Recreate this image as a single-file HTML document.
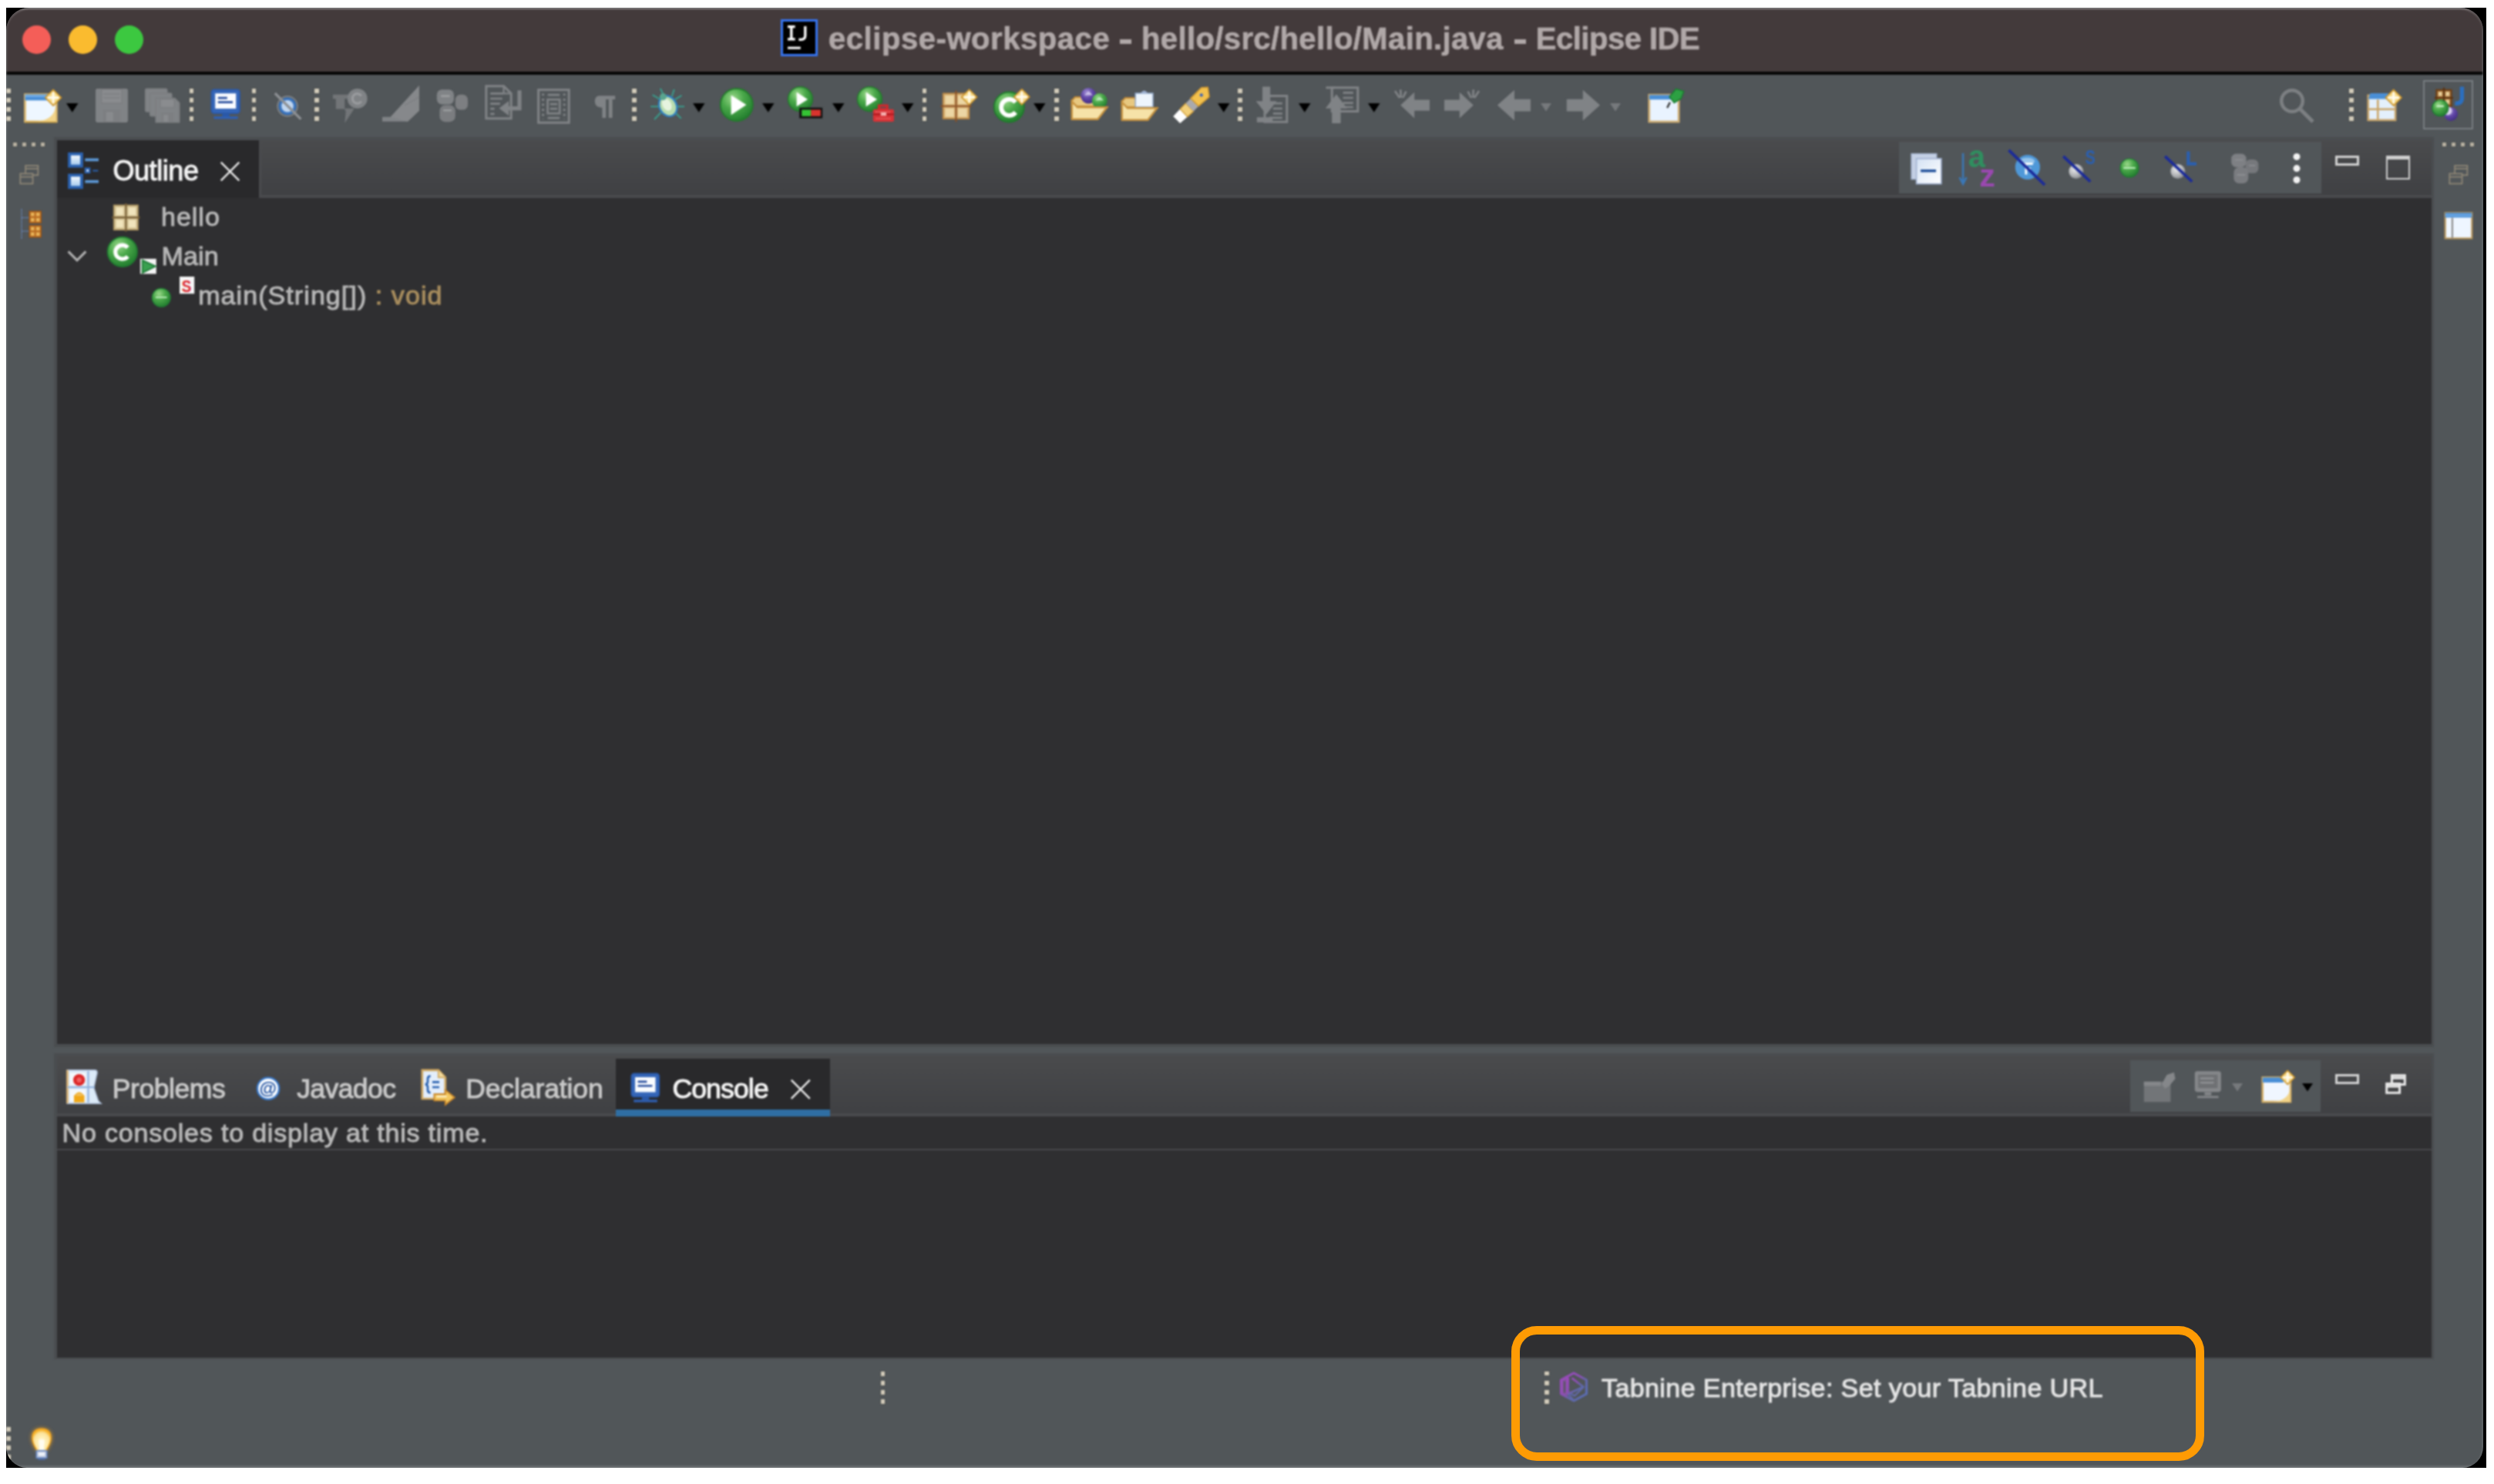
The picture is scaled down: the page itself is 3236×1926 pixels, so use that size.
<!DOCTYPE html>
<html><head><meta charset="utf-8"><title>Eclipse IDE</title>
<style>
html,body{margin:0;padding:0;}
body{width:3236px;height:1926px;background:#fff;overflow:hidden;position:relative;font-family:"Liberation Sans",sans-serif;}
.abs{position:absolute;}
#back{position:absolute;left:8px;top:10px;width:3218px;height:1895px;background:#000;}
#win{position:absolute;left:8px;top:10px;width:3214px;height:1895px;background:#515659;border-radius:30px 30px 27px 27px;overflow:hidden;}
#title{position:absolute;left:0;top:0;width:100%;height:84px;background:#433a3b;border-top:2px solid #6d6566;box-sizing:border-box;}
#tline{position:absolute;height:3.6px;background:#050505;}
.tl{position:absolute;width:37px;height:37px;border-radius:50%;top:33px;}
.t{position:absolute;white-space:nowrap;line-height:1;opacity:.999;-webkit-text-stroke:1px currentColor;}
.tt{-webkit-text-stroke:.6px currentColor;}
.tt{color:#b0a8a8;font-weight:bold;}
.pane{position:absolute;background:#2f2f31;}
.tabbar{position:absolute;background:linear-gradient(#4a4b4d,#3f4043);}
.atab{position:absolute;background:#29292b;}
.tbg{position:absolute;background:#515659;}
svg{position:absolute;overflow:visible;}
.dot{position:absolute;width:5.8px;height:5.8px;margin:.1px;background:#d2cbba;box-shadow:0 0 0 .6px rgba(70,66,58,.35);}
#c{position:absolute;left:-8px;top:-10px;width:3236px;height:1926px;}
#title{left:8px;top:10px;width:3214px;}
#tline{left:8px;top:93.3px;width:3214px;}
.tl{top:33px;}
.tree{color:#b6b6b6;}
.btab{color:#c8c8c8;}
.dot.s{width:4.6px;height:4.6px;background:#b9b2a2;}
#edge{position:absolute;left:8px;top:10px;width:3214px;height:1895px;border-radius:30px 30px 27px 27px;box-sizing:border-box;border:1.5px solid rgba(255,255,255,.22);border-top:2px solid rgba(255,255,255,.25);border-bottom:0;pointer-events:none;}
#bot{position:absolute;left:8px;top:1900.5px;width:3214px;height:5px;background:linear-gradient(rgba(255,255,255,0),rgba(255,255,255,.28));}
#c{filter:blur(1.2px);}
#t_outline{left:146.40px;top:204.03px;font-size:36px;letter-spacing:-0.417px}
#t_hello{left:209.00px;top:263.92px;font-size:34px;letter-spacing:1.000px}
#t_main{left:209.40px;top:314.62px;font-size:34px;letter-spacing:0.167px}
#t_meth{left:257.20px;top:366.22px;font-size:34px;letter-spacing:1.075px}
#t_prob{left:145.80px;top:1395.75px;font-size:35.5px;letter-spacing:-0.429px}
#t_jdoc{left:385.20px;top:1395.75px;font-size:35.5px;letter-spacing:-0.583px}
#t_decl{left:604.20px;top:1395.75px;font-size:35.5px;letter-spacing:-0.100px}
#t_cons{left:872.40px;top:1395.75px;font-size:35.5px;letter-spacing:-0.833px}
#t_nocon{left:80.60px;top:1452.92px;font-size:34px;letter-spacing:0.814px}
#t_tab{left:2078.00px;top:1783.82px;font-size:34px;letter-spacing:0.410px}
#tt_a{left:1075.00px;top:30.34px;font-size:40px;letter-spacing:0.555px}
#tt_b{left:1481.00px;top:30.34px;font-size:40px;letter-spacing:0.388px}
#tt_c{left:1992.80px;top:30.34px;font-size:40px;letter-spacing:-0.500px}

</style></head>
<body>
<svg style="position:absolute;width:0;height:0" aria-hidden="true"><defs>
<radialGradient id="gSp" cx=".5" cy=".5" r=".6"><stop offset="0" stop-color="#fff3c4"/><stop offset=".55" stop-color="#f2cf72"/><stop offset="1" stop-color="#d9982c"/></radialGradient>
<radialGradient id="gG" cx=".38" cy=".3" r=".75"><stop offset="0" stop-color="#9ad88a"/><stop offset=".45" stop-color="#4aa84a"/><stop offset="1" stop-color="#1f7a2c"/></radialGradient>
<radialGradient id="gGr" cx=".4" cy=".35" r=".7"><stop offset="0" stop-color="#ececec"/><stop offset=".6" stop-color="#b4b6b9"/><stop offset="1" stop-color="#84878b"/></radialGradient>
<radialGradient id="gP" cx=".4" cy=".3" r=".75"><stop offset="0" stop-color="#a694d8"/><stop offset=".5" stop-color="#6046a6"/><stop offset="1" stop-color="#3f2a80"/></radialGradient>
<linearGradient id="gBx2" x1="0" y1="0" x2="1" y2="1"><stop offset="0" stop-color="#d4e2f4"/><stop offset="1" stop-color="#ffffff"/></linearGradient>
<linearGradient id="gBx" x1="0" y1="0" x2="0" y2="1"><stop offset="0" stop-color="#ffffff"/><stop offset="1" stop-color="#9cc4ec"/></linearGradient>
</defs></svg>
<div id="back"></div>
<div id="win"><div id="c">
<div id="title"></div>
<div id="tline"></div>
<i class="tl" style="left:28.5px;background:#f45e58"></i>
<i class="tl" style="left:88.5px;background:#fabb2f"></i>
<i class="tl" style="left:148.5px;background:#3cc840"></i>
<svg style="left:1013px;top:25px;width:48px;height:48px" viewBox="0 0 16 16" >
<rect x="0.5" y="0.5" width="15" height="15" fill="#000" stroke="#3574f0" stroke-width="1"/>
<path d="M3 3.2 H6.2 M4.6 3.2 V8.6 M3 8.6 H6.2" stroke="#fff" stroke-width="1.1" fill="none"/>
<path d="M10.6 3 V7 Q10.6 8.8 8.8 8.8 H7.8" stroke="#fff" stroke-width="1.1" fill="none"/>
<path d="M3 12.4 H8.6" stroke="#fff" stroke-width="1"/>
</svg>
<div class="t tt" id="tt_a">eclipse-workspace</div><div class="abs" style="left:1453.3px;top:51.4px;width:14.5px;height:5.2px;background:#b0a8a8"></div><div class="t tt" id="tt_b">hello/src/hello/Main.java</div><div class="abs" style="left:1965.4px;top:51.4px;width:14.5px;height:5.2px;background:#b0a8a8"></div><div class="t tt" id="tt_c">Eclipse IDE</div>

<!-- main toolbar -->
<i class="dot" style="left:8px;top:115px"></i><i class="dot" style="left:8px;top:127.1px"></i><i class="dot" style="left:8px;top:139.2px"></i><i class="dot" style="left:8px;top:151.3px"></i>
<svg style="left:31px;top:114.5px;width:48px;height:48px" viewBox="0 0 16 16" >
<rect x="0.5" y="2.5" width="13.6" height="11.8" fill="#eef7ff" stroke="#dcb96e" stroke-width=".9"/>
<rect x="0.5" y="2.5" width="10" height="2.6" fill="#4a8fd6"/>
<path d="M0.5 3.2 H10.4" stroke="#8cc0f0" stroke-width=".5"/>
<path d="M13.8 6.5 C13.8 11.4 10.4 14.1 4.6 14.3 L13.8 14.3Z" fill="#f1d48a"/>
<path d="M0.6 14.5 H14" stroke="#c99b3a" stroke-width=".5"/>
<path d="M12.7 0.3999999999999999 L16.2 3.9 L12.7 7.4 L9.2 3.9Z" fill="url(#gSp)" stroke="#c8902a" stroke-width=".45"/><path d="M12.7 1.38 V6.42 M10.18 3.9 H15.219999999999999" stroke="#fffdf2" stroke-width=".85"/></svg>
<svg style="left:86px;top:133.5px;width:15.5px;height:15.5px" viewBox="0 0 16 16" ><path d="M0 0H16L8 12Z" fill="#000"/></svg>
<svg style="left:121px;top:113px;width:48px;height:48px" viewBox="0 0 16 16" >
<path d="M1 1.5 Q1 .7 1.8 .7 H14.2 Q15 .7 15 1.5 V14.5 Q15 15.3 14.2 15.3 H1.8 Q1 15.3 1 14.5Z" fill="#808386"/>
<rect x="3.6" y="1" width="8.8" height="6" fill="#8a8c8f" stroke="#7c7e81" stroke-width=".5"/>
<path d="M4.5 3 H11.5 M4.5 4.6 H11.5" stroke="#7c7e81" stroke-width=".5"/>
<rect x="4.2" y="9.8" width="7.6" height="5.5" fill="#7d7f82"/>
<rect x="5.6" y="10.8" width="3" height="4" fill="#888a8d"/>
</svg>
<svg style="left:187px;top:113px;width:48px;height:48px" viewBox="0 0 16 16" >
<rect x="0.5" y="0.7" width="9.5" height="10" rx=".6" fill="#808386" stroke="#7a7c7f" stroke-width=".4"/>
<rect x="2.5" y="2.6" width="9.5" height="10" rx=".6" fill="#808386" stroke="#7a7c7f" stroke-width=".4"/>
<path d="M5 4.8 H13.3 L15.3 6.8 V15.3 H5Z" fill="#808386" stroke="#7a7c7f" stroke-width=".4"/>
<rect x="7" y="5.2" width="6" height="3.6" fill="#8a8c8f" stroke="#7c7e81" stroke-width=".4"/>
<rect x="7.4" y="11" width="5.4" height="4.3" fill="#7d7f82"/>
<rect x="8.4" y="12" width="2" height="3" fill="#888a8d"/>
</svg>
<i class="dot" style="left:245.5px;top:115px"></i><i class="dot" style="left:245.5px;top:127.1px"></i><i class="dot" style="left:245.5px;top:139.2px"></i><i class="dot" style="left:245.5px;top:151.3px"></i>
<svg style="left:272px;top:113.5px;width:48px;height:48px" viewBox="0 0 16 16" >
<rect x="0.8" y="0.8" width="12.2" height="10.2" rx="1.2" fill="#3566b8" stroke="#2a58a8" stroke-width=".6"/>
<rect x="2.4" y="2.4" width="9" height="6.6" fill="#fafcff"/>
<path d="M3.6 4.4 H7.6 M3.6 6.2 H10" stroke="#2a4f9e" stroke-width=".9"/>
<path d="M5.4 11.2 H8.6 V12.4 H5.4Z" fill="#2a58a8"/>
<path d="M1.8 12.9 H12.2" stroke="#2f60b4" stroke-width="1.1"/>
</svg>
<i class="dot" style="left:326.6px;top:115px"></i><i class="dot" style="left:326.6px;top:127.1px"></i><i class="dot" style="left:326.6px;top:139.2px"></i><i class="dot" style="left:326.6px;top:151.3px"></i>
<svg style="left:352px;top:112px;width:48px;height:48px" viewBox="0 0 16 16" >
<circle cx="7" cy="8.6" r="4.3" fill="none" stroke="#8d9094" stroke-width=".5" opacity=".9"/>
<circle cx="7" cy="8.6" r="3.2" fill="#c0d6f0" stroke="#3a74be" stroke-width="1.2"/>
<path d="M1.6 3 L12.8 14.2" stroke="#8d9094" stroke-width="1.1"/>
</svg>
<i class="dot" style="left:408px;top:115px"></i><i class="dot" style="left:408px;top:127.1px"></i><i class="dot" style="left:408px;top:139.2px"></i><i class="dot" style="left:408px;top:151.3px"></i>
<svg style="left:431px;top:112px;width:48px;height:48px" viewBox="0 0 16 16" >
<path d="M0.3 3.6 H7 V5.4 H5.4 V9.8 H1.6 V5.4 H0.3Z" fill="#727578"/>
<circle cx="10.9" cy="5.3" r="4.3" fill="#808386"/>
<path d="M12.6 4.1 A2.1 2.1 0 1 0 12.6 6.5" fill="none" stroke="#9a9c9f" stroke-width="1"/>
<path d="M5.2 9.6 H9.6 L5.4 16 L5.9 10.8Z" fill="#727578"/>
</svg>
<svg style="left:496px;top:111px;width:48px;height:48px" viewBox="0 0 16 16" >
<path d="M0 15.6 H11 L16 10.8 V0 L3.6 13.6 H0Z" fill="#808386"/>
<path d="M3.6 13.6 L16 0 V10.8 L11 15.6 Z" fill="#86888b"/>
<path d="M9.6 8.6 L16 5" stroke="#7c7e81" stroke-width=".4"/>
</svg>
<svg style="left:565px;top:112px;width:48px;height:48px" viewBox="0 0 16 16" >
<rect x="0.6" y="1.4" width="7.4" height="6.4" rx="2.2" fill="#808386"/>
<rect x="8.6" y="3.6" width="5.4" height="6.6" rx="2.2" fill="#7d7f82"/>
<rect x="1.8" y="8.2" width="6.8" height="7.2" rx="2.4" fill="#7b7d80"/>
<path d="M2.4 4.2 H6.2 M3.4 10.4 H7" stroke="#a0a2a4" stroke-width=".7"/>
</svg>
<svg style="left:629px;top:110px;width:48px;height:48px" viewBox="0 0 16 16" >
<path d="M0.6 0.6 H8.2 L11.4 3.8 V14.6 H0.6Z" fill="none" stroke="#808386" stroke-width="1"/>
<path d="M8.2 0.6 V3.8 H11.4" fill="none" stroke="#808386" stroke-width=".8"/>
<path d="M2.4 3.8 H8 M2.4 6 H7.6 M2.4 8.2 H6.6 M2.4 10.4 H4.2 M2.4 12.6 H4.2" stroke="#808386" stroke-width=".9"/>
<path d="M15 2.4 V10.2 H9.4" fill="none" stroke="#808386" stroke-width="1.7"/>
<path d="M10.4 7 L6.2 10.2 L10.4 13.4Z" fill="#808386"/>
</svg>
<svg style="left:695px;top:113px;width:48px;height:48px" viewBox="0 0 16 16" >
<rect x="1.2" y="1.2" width="13.2" height="14.2" fill="none" stroke="#808386" stroke-width="1"/>
<rect x="5.2" y="5.4" width="5.2" height="6" fill="none" stroke="#808386" stroke-width=".9"/>
<path d="M5.2 3.4 H10.4 M5.2 13.4 H10.4 M6.2 7.4 H9.4 M6.2 9.4 H9.4" stroke="#808386" stroke-width=".9"/>
<path d="M3.2 2.8 V14" stroke="#808386" stroke-width="1" stroke-dasharray=".9 1.3"/>
<path d="M12.4 2.8 V14" stroke="#808386" stroke-width="1" stroke-dasharray=".9 1.3"/>
</svg>
<svg style="left:770px;top:123px;width:48px;height:48px" viewBox="0 0 16 16" >
<path d="M2.6 0.4 H9.4 V2 H8.2 V10 H6.6 V2 H5.4 V10 H3.8 V5.6 Q0.6 5.4 0.6 2.9 Q0.6 .5 2.6 .4Z" fill="#808386"/>
</svg>
<i class="dot" style="left:820.4px;top:115px"></i><i class="dot" style="left:820.4px;top:127.1px"></i><i class="dot" style="left:820.4px;top:139.2px"></i><i class="dot" style="left:820.4px;top:151.3px"></i>
<svg style="left:843px;top:113px;width:48px;height:48px" viewBox="0 0 16 16" >
<g stroke="#3a9a8a" stroke-width=".7" fill="none">
<path d="M4.6 5.4 L1.2 3.4 M4 8.4 H0.4 M4.8 11 L2 14 M11 5.4 L13.8 3.6 M11.8 8.4 H15 M11 11 L13.6 13.6 M6.2 4 L4.6 0.6 M9.6 4 L10.6 1"/>
</g>
<ellipse cx="7.9" cy="8.2" rx="3.7" ry="4.6" transform="rotate(-28 7.9 8.2)" fill="#b9dcae" stroke="#2f7fc0" stroke-width=".8"/>
<ellipse cx="7.4" cy="7.6" rx="1.9" ry="2.8" transform="rotate(-28 7.4 7.6)" fill="#e6f3df"/>
<circle cx="5.8" cy="4.2" r="1.5" fill="#5aa58e"/>
</svg>
<svg style="left:899px;top:133.5px;width:15.5px;height:15.5px" viewBox="0 0 16 16" ><path d="M0 0H16L8 12Z" fill="#000"/></svg>
<svg style="left:933px;top:112px;width:48px;height:48px" viewBox="0 0 16 16" >
<circle cx="7.6" cy="8" r="7" fill="url(#gG)" stroke="#237a2b" stroke-width=".6"/>
<path d="M5.2 3.8 L11.8 8 L5.2 12.4Z" fill="#fff"/>
</svg>
<svg style="left:989px;top:133.5px;width:15.5px;height:15.5px" viewBox="0 0 16 16" ><path d="M0 0H16L8 12Z" fill="#000"/></svg>
<svg style="left:1021px;top:110px;width:48px;height:48px" viewBox="0 0 16 16" >
<circle cx="5.8" cy="6.2" r="5.3" fill="url(#gG)" stroke="#237a2b" stroke-width=".5"/>
<path d="M4.2 3.2 L9 6.3 L4.2 9.4Z" fill="#fff"/>
<rect x="5.4" y="9.9" width="10" height="4.6" fill="#101010"/>
<rect x="6.4" y="10.8" width="4" height="2.8" fill="#35c435"/>
<rect x="10.4" y="10.8" width="4.2" height="2.8" fill="#d8342e"/>
</svg>
<svg style="left:1079.5px;top:133.5px;width:15.5px;height:15.5px" viewBox="0 0 16 16" ><path d="M0 0H16L8 12Z" fill="#000"/></svg>
<svg style="left:1111px;top:110px;width:48px;height:48px" viewBox="0 0 16 16" >
<circle cx="5.8" cy="6.2" r="5.3" fill="url(#gG)" stroke="#237a2b" stroke-width=".5"/>
<path d="M4.2 3.2 L9 6.3 L4.2 9.4Z" fill="#fff"/>
<path d="M9.8 9 H13.4 V10.6 H9.8Z" fill="none" stroke="#d5262a" stroke-width="1"/>
<rect x="7.3" y="10.6" width="9" height="5.4" rx=".6" fill="#d93236"/>
<path d="M7.3 12.8 H16.3" stroke="#a9151b" stroke-width=".6"/>
<path d="M8.4 11.8 H15 M8.6 14.6 H15" stroke="#f08a8a" stroke-width=".4" stroke-dasharray=".6 .5"/>
<rect x="10.6" y="12" width="2.4" height="1.4" fill="#f5b0b0"/>
</svg>
<svg style="left:1169.5px;top:133.5px;width:15.5px;height:15.5px" viewBox="0 0 16 16" ><path d="M0 0H16L8 12Z" fill="#000"/></svg>
<i class="dot" style="left:1196.5px;top:115px"></i><i class="dot" style="left:1196.5px;top:127.1px"></i><i class="dot" style="left:1196.5px;top:139.2px"></i><i class="dot" style="left:1196.5px;top:151.3px"></i>
<svg style="left:1221px;top:112px;width:48px;height:48px" viewBox="0 0 16 16" >
<rect x="0.9" y="3.1" width="11.2" height="10.9" fill="#d9b478" stroke="#b98542" stroke-width=".6"/>
<path d="M6.5 1.8 V15.4 M-0.2 8.6 H13.2" stroke="#8a4f24" stroke-width=".7"/>
<rect x="1.8" y="4" width="3.8" height="3.7" fill="#ecd6a4"/><rect x="7.4" y="4" width="3.8" height="3.7" fill="#ecd6a4"/>
<rect x="1.8" y="9.6" width="3.8" height="3.6" fill="#ecd6a4"/><rect x="7.4" y="9.6" width="3.8" height="3.6" fill="#ecd6a4"/>
<path d="M12.2 1.3000000000000003 L15.6 4.7 L12.2 8.1 L8.799999999999999 4.7Z" fill="url(#gSp)" stroke="#c8902a" stroke-width=".45"/><path d="M12.2 2.2520000000000002 V7.148 M9.751999999999999 4.7 H14.648" stroke="#fffdf2" stroke-width=".85"/></svg>
<svg style="left:1288px;top:112px;width:48px;height:48px" viewBox="0 0 16 16" >
<circle cx="7.1" cy="9" r="6.5" fill="url(#gG)" stroke="#1f7a2b" stroke-width=".6"/>
<path d="M9.9 6.9 A3.5 3.5 0 1 0 9.9 11.3" fill="none" stroke="#fff" stroke-width="1.9"/>
<path d="M12.6 1.1999999999999997 L16.0 4.6 L12.6 8.0 L9.2 4.6Z" fill="url(#gSp)" stroke="#c8902a" stroke-width=".45"/><path d="M12.6 2.1519999999999997 V7.048 M10.152 4.6 H15.048" stroke="#fffdf2" stroke-width=".85"/></svg>
<svg style="left:1340.5px;top:133.5px;width:15.5px;height:15.5px" viewBox="0 0 16 16" ><path d="M0 0H16L8 12Z" fill="#000"/></svg>
<i class="dot" style="left:1368px;top:115px"></i><i class="dot" style="left:1368px;top:127.1px"></i><i class="dot" style="left:1368px;top:139.2px"></i><i class="dot" style="left:1368px;top:151.3px"></i>
<svg style="left:1389px;top:111px;width:48px;height:48px" viewBox="0 0 16 16" >
<path d="M0.6 6.4 L2 5 H6 L7 6.2 H12 V9 H0.6Z" fill="#e8c880" stroke="#c08a38" stroke-width=".7"/>
<circle cx="7.8" cy="4.4" r="3.4" fill="url(#gP)"/><path d="M6 4.2 L7.8 2.4 L9.6 4.2Z" fill="#c8bce8"/>
<circle cx="12.6" cy="6.6" r="3.3" fill="url(#gG)"/><path d="M10.8 6.4 L12.6 4.8 L14.4 6.4Z" fill="#b8e8b8"/>
<path d="M0.6 14.6 V7 L3 9.4 H15.8 L11.8 14.6Z" fill="#f6e2a8" stroke="#c7923e" stroke-width=".8"/>
</svg>
<svg style="left:1454px;top:112px;width:48px;height:48px" viewBox="0 0 16 16" >
<path d="M0.6 6.4 L2 5 H6 L7 6.2 H12 V9 H0.6Z" fill="#e8c880" stroke="#c08a38" stroke-width=".7"/>
<rect x="6.4" y="3" width="7.6" height="6" fill="#eef5fc" stroke="#8fa6c8" stroke-width=".5"/>
<path d="M8.6 3 Q10.2 .6 11.8 3Z" fill="#9fb2d4"/>
<path d="M0.6 14.6 V7 L3 9.4 H15.8 L11.8 14.6Z" fill="#f6e2a8" stroke="#c7923e" stroke-width=".8"/>
</svg>
<svg style="left:1521px;top:112px;width:48px;height:48px" viewBox="0 0 16 16" >
<path d="M0.4 13 L3.4 16 L6.6 13.2 L3.4 9.8Z" fill="#ffffff"/>
<path d="M3.4 9.8 L6.6 13.2 L9.2 10.8 L5.8 7.4Z" fill="#f2cf7a" stroke="#d39a2e" stroke-width=".4"/>
<path d="M5.8 7.4 L9.2 10.8 L11.4 8.6 L8 5.2Z" fill="#a9a9ad"/>
<path d="M8 5.2 L11.4 8.6 L16 4.6 L15.4 0.4 L12.6 0.6Z" fill="#f2c14e" stroke="#d39a2e" stroke-width=".5"/>
<circle cx="12.6" cy="3.8" r=".7" fill="#3a62b8"/>
</svg>
<svg style="left:1579.5px;top:133.5px;width:15.5px;height:15.5px" viewBox="0 0 16 16" ><path d="M0 0H16L8 12Z" fill="#000"/></svg>
<i class="dot" style="left:1606px;top:115px"></i><i class="dot" style="left:1606px;top:127.1px"></i><i class="dot" style="left:1606px;top:139.2px"></i><i class="dot" style="left:1606px;top:151.3px"></i>
<svg style="left:1629px;top:112px;width:48px;height:48px" viewBox="0 0 16 16" >
<path d="M4 4.2 H13.6 V15.4 H4Z" fill="none" stroke="#808386" stroke-width="1"/>
<path d="M7.6 7.4 H11.6 M7.6 9.6 H11.6 M7.6 11.8 H11.6 M6 13.6 H11.6" stroke="#808386" stroke-width=".9"/>
<path d="M3 0.2 H6.4 V6.4 H9.2 L4.7 12.2 L0.2 6.4 H3Z" fill="#808386"/>
<path d="M0.6 13.4 H7.4 V15.6 H0.6Z" fill="#808386"/>
</svg>
<svg style="left:1684.5px;top:133.5px;width:15.5px;height:15.5px" viewBox="0 0 16 16" ><path d="M0 0H16L8 12Z" fill="#000"/></svg>
<svg style="left:1718px;top:112px;width:48px;height:48px" viewBox="0 0 16 16" >
<path d="M3.4 0.6 H14.6 V10.8 H3.4Z" fill="none" stroke="#808386" stroke-width="1"/>
<path d="M8.2 2.8 H12.6 M8.2 5 H12.6 M8.2 7.2 H12.6 M8.2 9 H12.6" stroke="#808386" stroke-width=".9"/>
<path d="M3.4 16 H7.2 V9.6 H10 L5.3 3.4 L0.6 9.6 H3.4Z" fill="#808386"/>
<path d="M0.8 .6 H4.6" stroke="#808386" stroke-width="1"/>
</svg>
<svg style="left:1774.5px;top:133.5px;width:15.5px;height:15.5px" viewBox="0 0 16 16" ><path d="M0 0H16L8 12Z" fill="#000"/></svg>
<svg style="left:1807px;top:112px;width:48px;height:48px" viewBox="0 0 16 16" >
<path d="M16 5.8 H9.4 V2.6 L3.4 8.2 L9.4 13.8 V10.6 H16Z" fill="#808386"/>
<path d="M1 2 L3 5 M3.4 1.4 L3.6 5 M5.8 2.2 L4.4 5" stroke="#808386" stroke-width=".9"/>
</svg>
<svg style="left:1874px;top:112px;width:48px;height:48px" viewBox="0 0 16 16" >
<path d="M0 5.8 H6.6 V2.6 L12.6 8.2 L6.6 13.8 V10.6 H0Z" fill="#808386"/>
<path d="M15 2 L13 5 M12.6 1.4 L12.4 5 M10.2 2.2 L11.6 5" stroke="#808386" stroke-width=".9"/>
</svg>
<svg style="left:1941px;top:112px;width:48px;height:48px" viewBox="0 0 16 16" ><path d="M15 5.6 H8 V1.6 L0.6 8.2 L8 14.8 V10.8 H15Z" fill="#808386"/></svg>
<svg style="left:1998.5px;top:134px;width:14px;height:14px" viewBox="0 0 16 16" ><path d="M0 0H16L8 12Z" fill="#76797c"/></svg>
<svg style="left:2031px;top:112px;width:48px;height:48px" viewBox="0 0 16 16" ><path d="M0.6 5.6 H7.6 V1.6 L15 8.2 L7.6 14.8 V10.8 H0.6Z" fill="#808386"/></svg>
<svg style="left:2088.5px;top:134px;width:14px;height:14px" viewBox="0 0 16 16" ><path d="M0 0H16L8 12Z" fill="#76797c"/></svg>
<svg style="left:2138px;top:113px;width:48px;height:48px" viewBox="0 0 16 16" >
<rect x="0.6" y="3.4" width="12.8" height="11.6" fill="#e9f3ff" stroke="#d0ae72" stroke-width=".9"/>
<rect x="0.6" y="3.4" width="12.8" height="2" fill="#4a8fd6"/>
<path d="M9.6 6.6 L8.4 9" stroke="#333" stroke-width=".8"/>
<path d="M9.4 4.2 L12.2 0.8 L15.6 1.8 L14.4 5 L11.4 6.8Z" fill="#2da043" stroke="#1b7a30" stroke-width=".5"/>
</svg>
<svg style="left:2956px;top:113px;width:48px;height:48px" viewBox="0 0 16 16" >
<circle cx="6" cy="6" r="4.6" fill="none" stroke="#7d8083" stroke-width="1.5"/>
<path d="M9.4 9.4 L15 15" stroke="#7d8083" stroke-width="1.6"/>
</svg>
<i class="dot" style="left:3048px;top:115px"></i><i class="dot" style="left:3048px;top:127.1px"></i><i class="dot" style="left:3048px;top:139.2px"></i><i class="dot" style="left:3048px;top:151.3px"></i>
<svg style="left:3070px;top:113px;width:48px;height:48px" viewBox="0 0 16 16" >
<rect x="0.9" y="3.6" width="11.8" height="10.7" fill="#e4f0fc" stroke="#c9a56a" stroke-width=".85"/>
<path d="M1.4 3.8 Q1.4 2.7 2.4 2.7 H9.6 V5.2 H0.9Z" fill="#4a8fd6"/>
<path d="M5.1 5.4 V14 M0.9 9.6 H12.7" stroke="#c9a56a" stroke-width=".85"/>
<path d="M11.9 1.0999999999999996 L15.4 4.6 L11.9 8.1 L8.4 4.6Z" fill="url(#gSp)" stroke="#c8902a" stroke-width=".45"/><path d="M11.9 2.0799999999999996 V7.119999999999999 M9.38 4.6 H14.42" stroke="#fffdf2" stroke-width=".85"/></svg>
<div class="abs" style="left:3144px;top:104px;width:65px;height:64px;border:2px solid #787d81;box-sizing:border-box"></div>
<svg style="left:3153px;top:112px;width:48px;height:48px" viewBox="0 0 16 16" >
<rect x="2.8" y="1.6" width="6.4" height="7" fill="#a8763e" stroke="#6a3d14" stroke-width=".7"/>
<path d="M6 .6 V9 M2 5 H10" stroke="#5a3210" stroke-width=".7"/>
<rect x="3.6" y="2.4" width="1.6" height="1.8" fill="#e8cf9a"/><rect x="6.8" y="2.4" width="1.6" height="1.8" fill="#e8cf9a"/>
<rect x="3.6" y="5.8" width="1.6" height="1.8" fill="#e8cf9a"/><rect x="6.8" y="5.8" width="1.6" height="1.8" fill="#e8cf9a"/>
<path d="M13.8 .2 V5.4 Q13.6 7.6 10.8 7.4" fill="none" stroke="#2b6fc0" stroke-width="1.8"/>
<circle cx="9" cy="12" r="3" fill="url(#gP)"/><circle cx="7.6" cy="10.6" r="1.9" fill="#e4def4" opacity=".85"/>
<circle cx="4.4" cy="9.4" r="3.5" fill="url(#gG)" stroke="#1c7a30" stroke-width=".4"/><path d="M2.8 8.6 H6" stroke="#c8f0c8" stroke-width=".7"/>
</svg>

<!-- left sidebar -->
<i class="dot s" style="left:17px;top:185px"></i><i class="dot s" style="left:29.05px;top:185px"></i><i class="dot s" style="left:41.1px;top:185px"></i><i class="dot s" style="left:53.15px;top:185px"></i>
<svg style="left:25px;top:214px;width:26px;height:26px" viewBox="0 0 16 16" >
<rect x="5" y="0.6" width="10" height="7.6" fill="none" stroke="#8e8676" stroke-width="1.1"/>
<path d="M5 3 H15" stroke="#8e8676" stroke-width="1.1"/>
<rect x="0.8" y="7" width="10" height="8" fill="#515659" stroke="#8e8676" stroke-width="1.1"/>
<path d="M0.8 9.6 H10.8" stroke="#8e8676" stroke-width="1.1"/>
</svg>
<svg style="left:25.5px;top:271px;width:40px;height:40px" viewBox="0 0 16 16" >
<path d="M0.8 0 V16 M0.8 4.6 H4.6 M0.8 11.6 H4.6" stroke="#6a86b8" stroke-width=".6" stroke-dasharray=".6 .4" fill="none"/>
<rect x="4.8" y="1.2" width="6.2" height="6.2" fill="#b96c22" stroke="#8e4f16" stroke-width=".4"/>
<rect x="4.8" y="8.6" width="6.2" height="6.2" fill="#b96c22" stroke="#8e4f16" stroke-width=".4"/>
<g fill="#e8b45a"><rect x="5.6" y="2" width="1.8" height="1.8"/><rect x="8.4" y="2" width="1.8" height="1.8"/><rect x="5.6" y="4.8" width="1.8" height="1.8"/><rect x="8.4" y="4.8" width="1.8" height="1.8"/>
<rect x="5.6" y="9.4" width="1.8" height="1.8"/><rect x="8.4" y="9.4" width="1.8" height="1.8"/><rect x="5.6" y="12.2" width="1.8" height="1.8"/><rect x="8.4" y="12.2" width="1.8" height="1.8"/></g>
</svg>
<!-- right sidebar -->
<i class="dot s" style="left:3169px;top:185px"></i><i class="dot s" style="left:3181.05px;top:185px"></i><i class="dot s" style="left:3193.1px;top:185px"></i><i class="dot s" style="left:3205.15px;top:185px"></i>
<svg style="left:3177px;top:214px;width:26px;height:26px" viewBox="0 0 16 16" >
<rect x="5" y="0.6" width="10" height="7.6" fill="none" stroke="#8e8676" stroke-width="1.1"/>
<path d="M5 3 H15" stroke="#8e8676" stroke-width="1.1"/>
<rect x="0.8" y="7" width="10" height="8" fill="#515659" stroke="#8e8676" stroke-width="1.1"/>
<path d="M0.8 9.6 H10.8" stroke="#8e8676" stroke-width="1.1"/>
</svg>
<svg style="left:3171px;top:274px;width:38px;height:38px" viewBox="0 0 16 16" >
<rect x="0.7" y="0.9" width="14.6" height="14" fill="#eef6ff" stroke="#b8955a" stroke-width=".9"/>
<rect x="0.7" y="0.9" width="14.6" height="2.6" fill="#4a8fd6"/>
<path d="M0.7 2.2 H15.3" stroke="#9cc8f0" stroke-width=".5"/>
<path d="M4.6 3.6 V14.8" stroke="#8a8a8a" stroke-width=".9"/>
</svg>

<!-- outline pane -->
<div class="abs" style="left:70px;top:178px;width:3088px;height:1181px;background:#4a4d50"></div>
<div class="abs" style="left:70px;top:1367px;width:3088px;height:397px;background:#4a4d50"></div>
<div class="tabbar" style="left:74px;top:181.5px;width:3080.5px;height:75.5px"></div>
<div class="abs" style="left:74px;top:253px;width:3080.5px;height:4px;background:linear-gradient(#47484b,#4b4c4f 40%,#464749)"></div><div class="abs" style="left:336px;top:182px;width:2.5px;height:72px;background:#4a4b4e"></div>
<div class="atab" style="left:74px;top:181.5px;width:262px;height:75.5px"></div>
<div class="pane" style="left:74px;top:257px;width:3080.5px;height:1098px"></div>
<svg style="left:88px;top:198px;width:47px;height:47px" viewBox="0 0 16 16" >
<rect x="0.7" y="0.6" width="5.4" height="5.4" fill="url(#gBx)" stroke="#2b62b0" stroke-width="1.3"/>
<rect x="0.7" y="10" width="5.4" height="5.4" fill="url(#gBx)" stroke="#2b62b0" stroke-width="1.3"/>
<path d="M7.6 3.2 H13.6 M7.6 12.8 H13.6" stroke="#5c98d6" stroke-width="1.3"/>
<rect x="7.4" y="6.6" width="2.6" height="2.6" fill="#2b62b0"/><rect x="8.3" y="7.5" width=".9" height=".9" fill="#dfeaf8"/>
<path d="M11 8 H13.4" stroke="#2b62b0" stroke-width=".7"/>
</svg>
<div class="t" style="color:#f4f4f4" id="t_outline">Outline</div>
<svg style="left:285px;top:208.5px;width:27px;height:27px" viewBox="0 0 16 16" ><path d="M1 1 L15 15 M15 1 L1 15" stroke="#e8e8e8" stroke-width="1.4" fill="none"/></svg>
<div class="tbg" style="left:2464px;top:184px;width:548px;height:67px"></div>
<svg style="left:2479.5px;top:199px;width:42px;height:42px" viewBox="0 0 16 16" >
<rect x="0" y="0.2" width="12.5" height="12.6" fill="#c4d0e4" stroke="#a4b4d0" stroke-width=".5"/>
<rect x="2.5" y="2.6" width="12.3" height="12.5" fill="url(#gBx2)" stroke="#9fb0d0" stroke-width=".6"/>
<path d="M4.6 8.65 H12.2" stroke="#1f4f9a" stroke-width="1.3"/>
</svg>
<svg style="left:2540px;top:196px;width:44px;height:44px" viewBox="0 0 16 16" >
<path d="M2.56 1 V15 M0.9 12.4 L2.56 15.6 L4.2 12.4" fill="none" stroke="#3a78b8" stroke-width=".9"/>
<text x="5" y="7.8" font-family="Liberation Sans" font-weight="bold" font-size="14.5" fill="#2f8f5f">a</text>
<text x="10.3" y="16.7" font-family="Liberation Sans" font-weight="bold" font-size="15" fill="#9a48b0">z</text>
</svg>
<svg style="left:2605px;top:196px;width:46px;height:46px" viewBox="0 0 16 16" >
<circle cx="9" cy="7.3" r="5.6" fill="#4f98d8"/>
<ellipse cx="8.8" cy="4.6" rx="3.4" ry="1.6" fill="#a8d0f0" opacity=".8"/>
<path d="M7 5.8 H11.4 M8.3 5.8 V10.6 M8.3 8 H10.4" stroke="#fff" stroke-width="1" fill="none"/>
<path d="M0.5 -0.4 L16.7 15.3" stroke="#1a2a9a" stroke-width="1.3"/>
</svg>
<svg style="left:2676px;top:192px;width:46px;height:46px" viewBox="0 0 16 16" >
<circle cx="6.2" cy="10.6" r="3.3" fill="url(#gGr)"/>
<path d="M0.4 3.8 L12.6 15.2" stroke="#1a2a9a" stroke-width="1.25"/>
<text x="10.3" y="7.4" font-family="Liberation Sans" font-weight="bold" font-size="9.2" textLength="4.6" lengthAdjust="spacingAndGlyphs" fill="#2a5fb0">S</text>
</svg>
<svg style="left:2738.5px;top:193.5px;width:48px;height:48px" viewBox="0 0 16 16" >
<circle cx="8" cy="8" r="4" fill="url(#gG)" stroke="#1f7a33" stroke-width=".4"/>
<path d="M5.4 8 H10.6" stroke="#b8ecb8" stroke-width=".7"/>
</svg>
<svg style="left:2808px;top:192px;width:46px;height:46px" viewBox="0 0 16 16" >
<circle cx="6.2" cy="10.6" r="3.3" fill="url(#gGr)"/>
<path d="M0.4 3.8 L12.6 15.2" stroke="#1a2a9a" stroke-width="1.25"/>
<path d="M10.9 1.6 V7.2 H14.6" fill="none" stroke="#2a5fb0" stroke-width="1.5"/>
</svg>
<svg style="left:2892px;top:198px;width:42px;height:42px" viewBox="0 0 16 16" >
<rect x="1.2" y="0.6" width="7.4" height="6.6" rx="2.4" fill="#7e8084"/>
<rect x="8.2" y="3.4" width="6.4" height="6.8" rx="2.4" fill="#76787c"/>
<rect x="2.4" y="7.2" width="7.2" height="8" rx="2.6" fill="#7a7c80"/>
<path d="M3 3.6 H7 M10 6.4 H13 M4 11 H8" stroke="#8e9094" stroke-width=".6"/>
</svg>
<svg style="left:2956px;top:194px;width:48px;height:48px" viewBox="0 0 16 16" ><circle cx="8" cy="3.13" r="1.5" fill="#f2f2f2"/><circle cx="8" cy="8.2" r="1.5" fill="#f2f2f2"/><circle cx="8" cy="13.17" r="1.5" fill="#f2f2f2"/></svg>
<div class="abs" style="left:3030px;top:202px;width:31px;height:13px;border:3px solid #d2d2d2;box-sizing:border-box"></div>
<div class="abs" style="left:3096px;top:202px;width:31px;height:31px;border:2.6px solid #cfcfcf;border-top-width:5px;box-sizing:border-box"></div>

<svg style="left:146px;top:264px;width:48px;height:48px" viewBox="0 0 16 16" >
<rect x="0.6" y="0.8" width="10.4" height="10.6" fill="#d8c79a" stroke="#a8905c" stroke-width=".6"/>
<path d="M5.8 0 V12.2 M-0.2 6.1 H11.8" stroke="#7a6238" stroke-width=".8"/>
<g fill="#f0e4bc"><rect x="1.6" y="1.8" width="3" height="3.2"/><rect x="7" y="1.8" width="3" height="3.2"/><rect x="1.6" y="7.2" width="3" height="3.2"/><rect x="7" y="7.2" width="3" height="3.2"/></g>
</svg>
<div class="t tree" id="t_hello">hello</div>
<svg style="left:87px;top:324px;width:26px;height:26px" viewBox="0 0 16 16" ><path d="M1 1.5 L8 8.5 L15 1.5" fill="none" stroke="#b0b0b0" stroke-width="1.9"/></svg>
<svg style="left:139px;top:307px;width:48px;height:48px" viewBox="0 0 16 16" >
<circle cx="6.6" cy="6.6" r="6.4" fill="url(#gG)" stroke="#1f7a30" stroke-width=".6"/>
<path d="M8.9 4.8 A3 3 0 1 0 8.9 8.6" fill="none" stroke="#fff" stroke-width="1.7"/>
</svg>
<svg style="left:181px;top:334px;width:49px;height:49px" viewBox="0 0 16 16" >
<rect x="0.3" y="0.6" width="6.8" height="6.4" fill="#f4f4f4"/>
<path d="M1.2 1.2 L6.8 3.8 L1.2 6.6Z" fill="#3aa050" stroke="#1f7a38" stroke-width=".6"/>
</svg>
<div class="t tree" id="t_main">Main</div>
<svg style="left:197px;top:374px;width:49px;height:49px" viewBox="0 0 16 16" >
<circle cx="4" cy="4" r="3.9" fill="url(#gG)" stroke="#1f7a33" stroke-width=".4"/>
<path d="M1.6 3.9 H6.4" stroke="#b8ecb8" stroke-width=".6"/>
</svg>
<svg style="left:233px;top:358.5px;width:48px;height:48px" viewBox="0 0 16 16" >
<rect x="0" y="0" width="6.4" height="7.4" fill="#f6f6f6"/>
<text x="0.9" y="6.6" font-family="Liberation Sans" font-weight="bold" font-size="7.6" textLength="4.2" lengthAdjust="spacingAndGlyphs" fill="#dc2a32">S</text>
</svg>
<div class="t tree" id="t_meth">main(String[])<span style="color:#a88d5e"> : void</span></div>

<!-- bottom pane -->
<div class="tabbar" style="left:74px;top:1370px;width:3080.5px;height:79px"></div>
<div class="abs" style="left:74px;top:1445px;width:3080.5px;height:4px;background:linear-gradient(#47484b,#4b4c4f 40%,#464749)"></div>
<div class="atab" style="left:799px;top:1374px;width:278px;height:66px"></div>
<div class="abs" style="left:799px;top:1440px;width:278px;height:9px;background:#2f6ea3"></div>
<div class="pane" style="left:74px;top:1449px;width:3080.5px;height:313px"></div>
<div class="abs" style="left:74px;top:1491px;width:3080.5px;height:2px;background:#47474a"></div>
<svg style="left:86px;top:1387px;width:47px;height:47px" viewBox="0 0 16 16" >
<path d="M0.4 0.6 H12.6 Q14.2 .6 13.4 3 L12.2 8.4 L14.2 14.2 L15.4 15.4 H0.4Z" fill="#dcebf8" stroke="#a8b8d0" stroke-width=".5"/>
<path d="M0.5 .6 V15.3" stroke="#d8b070" stroke-width=".9"/>
<rect x="1.6" y="1.8" width="7" height="5.4" fill="#f4f8fc"/>
<rect x="1.6" y="9.2" width="7" height="5.4" fill="#f4f8fc"/>
<path d="M9.7 1 V15 M0.5 8.2 H12.6" stroke="#8fb0dc" stroke-width=".7"/>
<circle cx="5.66" cy="5" r="2.6" fill="#dc2828"/><circle cx="5.66" cy="5" r="1.1" fill="#f06060"/>
<path d="M3.4 14.9 V12 Q5.7 8.8 8 12 V14.9Z" fill="#f0a818"/>
<path d="M3.8 12 Q5.7 9.6 7.6 12Z" fill="#f0c060"/>
</svg>
<div class="t btab" id="t_prob">Problems</div>
<svg style="left:324px;top:1389px;width:48px;height:48px" viewBox="0 0 16 16" >
<circle cx="8" cy="7.9" r="4.7" fill="#f8fbff" stroke="#3a78c8" stroke-width=".8"/>
<text x="7.8" y="10.4" text-anchor="middle" font-family="Liberation Sans" font-weight="bold" font-style="italic" font-size="7.6" fill="#1a4c9c">@</text>
</svg>
<div class="t btab" id="t_jdoc">Javadoc</div>
<svg style="left:546px;top:1387px;width:48px;height:48px" viewBox="0 0 16 16" >
<path d="M0.6 0.6 H7.6 L10.6 3.8 V13 H0.6Z" fill="#e3eefb" stroke="#d0a860" stroke-width=".9"/>
<path d="M7.6 0.6 V3.8 H10.6" fill="#f3dca0" stroke="#d0a860" stroke-width=".6"/>
<path d="M4.2 3.2 Q3 3.2 3 4.4 V5.6 Q3 6.6 2 6.8 Q3 7 3 8 V9.2 Q3 10.4 4.2 10.4" fill="none" stroke="#2a62b0" stroke-width=".9"/>
<path d="M5 5.8 H8 M5 8 H8" stroke="#2a62b0" stroke-width=".9"/>
<path d="M5.8 11 H10.6 V9.2 L14.6 12.4 L10.6 15.6 V13.8 H5.8Z" fill="#f3c860" stroke="#c8862a" stroke-width=".6"/>
<path d="M6.8 12 H11.2" stroke="#fff3cc" stroke-width=".7"/>
</svg>
<div class="t btab" id="t_decl">Declaration</div>
<svg style="left:816.5px;top:1390.5px;width:47px;height:47px" viewBox="0 0 16 16" >
<rect x="0.8" y="0.8" width="12.2" height="10.2" rx="1.2" fill="#3566b8" stroke="#2a58a8" stroke-width=".6"/>
<rect x="2.4" y="2.4" width="9" height="6.6" fill="#fafcff"/>
<path d="M3.6 4.4 H7.6 M3.6 6.2 H10" stroke="#2a4f9e" stroke-width=".9"/>
<path d="M5.4 11.2 H8.6 V12.4 H5.4Z" fill="#2a58a8"/>
<path d="M1.8 12.9 H12.2" stroke="#2f60b4" stroke-width="1.1"/>
</svg>
<div class="t btab" style="color:#f6f6f6" id="t_cons">Console</div>
<svg style="left:1025px;top:1400px;width:27.5px;height:27.5px" viewBox="0 0 16 16" ><path d="M1 1 L15 15 M15 1 L1 15" stroke="#e8e8e8" stroke-width="1.4" fill="none"/></svg>
<div class="t" style="color:#b8b8b8" id="t_nocon">No consoles to display at this time.</div>
<div class="tbg" style="left:2764px;top:1376px;width:247px;height:67px"></div>
<svg style="left:2779px;top:1389px;width:44px;height:44px" viewBox="0 0 16 16" >
<path d="M1 5.4 H13.6 V15 H1Z" fill="#727578"/>
<path d="M1 5.4 H9 V7.4 H1Z" fill="#85878a"/>
<path d="M9.4 6.6 L11.8 2.2 L15.2 1 L15.8 4 L13 7.4 L11 8.6Z" fill="#85878a"/>
</svg>
<svg style="left:2845px;top:1388px;width:44px;height:44px" viewBox="0 0 16 16" >
<rect x="1" y="0.8" width="12.4" height="9.8" rx="1.2" fill="#85878a"/>
<rect x="2.6" y="2.4" width="9.2" height="6.4" fill="#6f7174"/>
<path d="M3.6 4.2 H10 M3.6 6.2 H10" stroke="#909295" stroke-width=".8"/>
<path d="M5.6 10.8 H8.8 V12.2 H5.6Z" fill="#85878a"/>
<path d="M2.2 13 H12.2" stroke="#85878a" stroke-width="1"/>
</svg>
<svg style="left:2896px;top:1406px;width:14px;height:14px" viewBox="0 0 16 16" ><path d="M0 0H16L8 12Z" fill="#76797c"/></svg>
<svg style="left:2933.5px;top:1388px;width:46px;height:46px" viewBox="0 0 16 16" >
<rect x="0.6" y="3.6" width="12.6" height="11" fill="#f0f6ff" stroke="#d6b066" stroke-width=".9"/>
<rect x="0.6" y="3.6" width="9.4" height="2.3" fill="#4a8fd6"/>
<path d="M13 8 C13 12 10 14.4 5 14.6 L13 14.6Z" fill="#f1d48a"/>
<path d="M11.9 0.3999999999999999 L15.100000000000001 3.6 L11.9 6.800000000000001 L8.7 3.6Z" fill="url(#gSp)" stroke="#c8902a" stroke-width=".45"/><path d="M11.9 1.2960000000000003 V5.904 M9.596 3.6 H14.204" stroke="#fffdf2" stroke-width=".85"/></svg>
<svg style="left:2987px;top:1406px;width:14px;height:14px" viewBox="0 0 16 16" ><path d="M0 0H16L8 12Z" fill="#000"/></svg>
<div class="abs" style="left:3030px;top:1394px;width:31px;height:13px;border:3px solid #d2d2d2;box-sizing:border-box"></div>
<svg style="left:3095px;top:1394px;width:27px;height:27px" viewBox="0 0 16 16" >
<rect x="5" y="1" width="10" height="7" fill="none" stroke="#e8e8e8" stroke-width="1.8"/>
<path d="M5 3 H15" stroke="#e8e8e8" stroke-width="2"/>
<rect x="1" y="7.4" width="10" height="7" fill="#434446" stroke="#e8e8e8" stroke-width="1.8"/>
<path d="M1 9.4 H11" stroke="#e8e8e8" stroke-width="2"/>
</svg>

<!-- status bar -->
<i class="dot" style="left:1142.5px;top:1780px"></i><i class="dot" style="left:1142.5px;top:1792.1px"></i><i class="dot" style="left:1142.5px;top:1804.2px"></i><i class="dot" style="left:1142.5px;top:1816.3px"></i>
<i class="dot" style="left:2003.8px;top:1779.6px"></i><i class="dot" style="left:2003.8px;top:1791.7px"></i><i class="dot" style="left:2003.8px;top:1803.8px"></i><i class="dot" style="left:2003.8px;top:1815.9px"></i>
<svg style="left:2022px;top:1780px;width:40px;height:40px" viewBox="0 0 16 16" >
<defs><linearGradient id="tng" x1="0" y1="0" x2="1" y2="1"><stop offset="0" stop-color="#a048c0"/><stop offset=".45" stop-color="#8a50b4"/><stop offset=".6" stop-color="#6466aa"/><stop offset="1" stop-color="#5670b8"/></linearGradient></defs>
<path d="M8 0.8 L14.6 4.4 V11.6 L8 15.2 L1.4 11.6 V4.4Z" fill="none" stroke="url(#tng)" stroke-width="1.25" stroke-linejoin="round"/>
<path d="M1.6 4.6 L5.2 2.8 V12.6 L1.6 11.4Z" fill="#9450b4" opacity=".85"/>
<path d="M3.2 5 V11" stroke="#515659" stroke-width=".8"/>
<path d="M5 3.2 V11.6 L13 8 L7 3.4" fill="none" stroke="url(#tng)" stroke-width="1.1" stroke-linejoin="round"/>
<path d="M5 11.6 L8 14.8 M13 8.2 L8.4 12.6 L6.2 11.4" fill="none" stroke="#6068a8" stroke-width=".9"/>
</svg>
<div class="t" style="color:#e4e4e4" id="t_tab">Tabnine Enterprise: Set your Tabnine URL</div>
<i class="dot" style="left:8px;top:1852px"></i><i class="dot" style="left:8px;top:1864.1px"></i><i class="dot" style="left:8px;top:1876.2px"></i><i class="dot" style="left:8px;top:1888.3px"></i>
<svg style="left:30px;top:1850px;width:48px;height:48px" viewBox="0 0 16 16" >
<defs><radialGradient id="blg" cx=".5" cy=".62" r=".62"><stop offset="0" stop-color="#ffffff"/><stop offset=".35" stop-color="#fff0b8"/><stop offset=".7" stop-color="#fbe29a"/><stop offset=".9" stop-color="#f7b62e"/><stop offset="1" stop-color="#f0a020"/></radialGradient>
<filter id="blf" x="-50%" y="-50%" width="200%" height="200%"><feGaussianBlur stdDeviation=".9"/></filter></defs>
<path d="M8 1.2 Q12.4 1.4 12.4 5.4 Q12.4 7.4 10.6 10.2 V10.8 H5.4 V10.2 Q3.6 7.4 3.6 5.4 Q3.6 1.4 8 1.2Z" fill="#f5a623" filter="url(#blf)" opacity=".75"/>
<path d="M8 1.4 Q12 1.6 12 5.4 Q12 7.4 10.2 10.4 V10.9 H5.8 V10.4 Q4 7.4 4 5.4 Q4 1.6 8 1.4Z" fill="url(#blg)" stroke="#f5a820" stroke-width=".5"/>
<rect x="6.9" y="6.2" width="2.2" height="4.6" fill="#fffdf0"/>
<rect x="5.7" y="10.9" width="4.6" height="3.2" fill="#b8c4dc" stroke="#5f7fb8" stroke-width=".5"/>
<rect x="6.6" y="11.6" width="2.8" height="1.6" fill="#eef2fa"/>
<path d="M6.4 14.6 H9.6" stroke="#4a6aa8" stroke-width=".6"/>
</svg>
<div id="bot"></div><div id="edge"></div>
</div>
<div class="abs" style="left:1952.8px;top:1710.8px;width:899px;height:175px;border:11.8px solid #fe9b04;border-radius:33px;box-sizing:border-box"></div>
</div>

</body></html>
